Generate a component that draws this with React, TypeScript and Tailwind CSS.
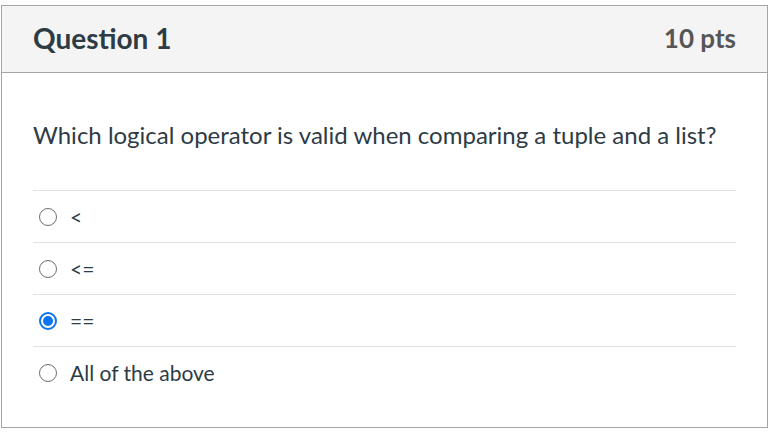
const OPTIONS = [
  { label: "<", checked: false },
  { label: "<=", checked: false },
  { label: "==", checked: true },
  { label: "All of the above", checked: false },
];

function Radio({ checked }: { checked: boolean }) {
  if (checked) {
    return (
      <span className="flex h-[18px] w-[18px] items-center justify-center rounded-full border-2 border-[#0b74f0] bg-white">
        <span className="h-[10px] w-[10px] rounded-full bg-[#0b74f0]" />
      </span>
    );
  }
  return <span className="block h-[18px] w-[18px] rounded-full border-[1.5px] border-[#6f6f6f] bg-white" />;
}

export default function App() {
  return (
    <div className="h-[440px] w-[773px] bg-white pl-[1px] pt-[5px] font-['Lato','Open_Sans',sans-serif] text-[#2d3b45]">
      <div className="w-[767px] border border-[#a5a5a5]">
        <div className="flex h-[67px] items-center justify-between border-b border-[#a5a5a5] bg-[#f4f4f4] px-[31px] pb-[3px]">
          <h2 className="text-[28px] leading-[34px] font-bold text-[#2d3b45]">Question 1</h2>
          <span className="text-[26px] leading-[34px] font-bold text-[#565656]">10 pts</span>
        </div>
        <div className="px-[31px] pb-[29px] pt-[47px]">
          <p className="text-[24px] leading-[30px]">Which logical operator is valid when comparing a tuple and a list?</p>
          <div className="mt-[40px]">
            {OPTIONS.map((o, i) => (
              <label
                key={i}
                className="flex h-[52px] items-center gap-[13px] border-t border-[#e2e2e2] pl-[6px] text-[21px]"
              >
                <Radio checked={o.checked} />
                <span>{o.label}</span>
              </label>
            ))}
          </div>
        </div>
      </div>
    </div>
  );
}
